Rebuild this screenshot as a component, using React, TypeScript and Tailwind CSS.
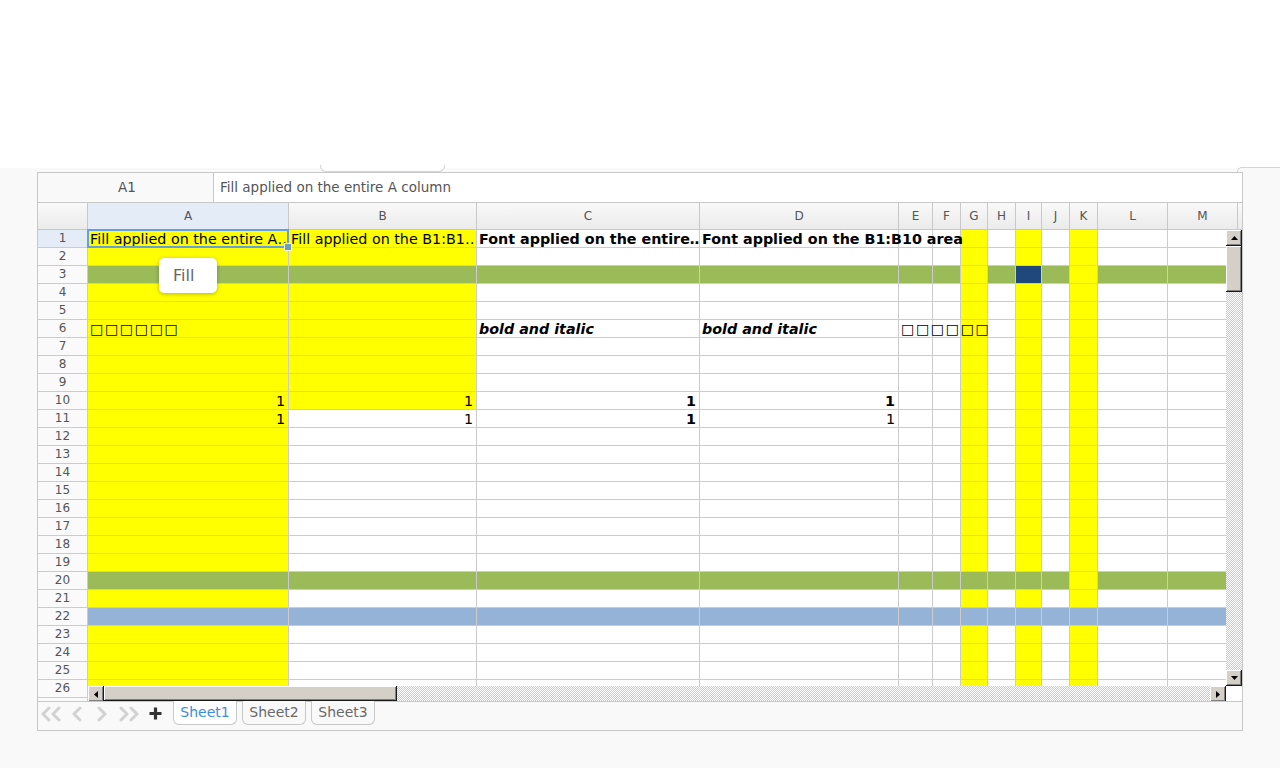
import React from 'react';

type Col = { id: string; w: string };
const COLS: Col[] = [
  { id: 'A', w: 'w-[201px]' },
  { id: 'B', w: 'w-[188px]' },
  { id: 'C', w: 'w-[223px]' },
  { id: 'D', w: 'w-[199px]' },
  { id: 'E', w: 'w-[34px]' },
  { id: 'F', w: 'w-[28px]' },
  { id: 'G', w: 'w-[27px]' },
  { id: 'H', w: 'w-[28px]' },
  { id: 'I', w: 'w-[26px]' },
  { id: 'J', w: 'w-[28px]' },
  { id: 'K', w: 'w-[28px]' },
  { id: 'L', w: 'w-[70px]' },
  { id: 'M', w: 'w-[70px]' },
];

type Content = { t: string; b?: boolean; i?: boolean; r?: boolean; over?: boolean; box?: boolean };
const BOXES = '\u25A1\u25A1\u25A1\u25A1\u25A1\u25A1';
const CONTENT: Record<string, Content> = {
  A1: { t: 'Fill applied on the entire A\u2026' },
  B1: { t: 'Fill applied on the B1:B1\u2026' },
  C1: { t: 'Font applied on the entire\u2026', b: true },
  D1: { t: 'Font applied on the B1:B10 area', b: true, over: true },
  A6: { t: BOXES, over: true, box: true },
  C6: { t: 'bold and italic', b: true, i: true },
  D6: { t: 'bold and italic', b: true, i: true },
  E6: { t: BOXES, over: true, box: true },
  A10: { t: '1', r: true },
  B10: { t: '1', r: true },
  C10: { t: '1', r: true, b: true },
  D10: { t: '1', r: true, b: true },
  A11: { t: '1', r: true },
  B11: { t: '1', r: true },
  C11: { t: '1', r: true, b: true },
  D11: { t: '1', r: true },
};

const YELLOW = 'bg-[#ffff00]';
const GREEN = 'bg-[#9bbb59]';
const BLUE = 'bg-[#95b3d7]';
const DARK = 'bg-[#1f497d]';
const WHITE = 'bg-white';

function fillOf(r: number, c: string): string {
  if (r === 3) {
    if (c === 'G' || c === 'K') return YELLOW;
    if (c === 'I') return DARK;
    return GREEN;
  }
  if (r === 20) {
    if (c === 'K') return YELLOW;
    return GREEN;
  }
  if (r === 22) return BLUE;
  if (c === 'A') return YELLOW;
  if (c === 'B' && r <= 10) return YELLOW;
  if (c === 'G' || c === 'I' || c === 'K') return YELLOW;
  return WHITE;
}

function Cell({ r, col }: { r: number; col: Col }) {
  const key = col.id + r;
  const ct = CONTENT[key];
  const bg = fillOf(r, col.id);
  const weight = ct?.b ? 'font-bold' : 'font-normal';
  const style = ct?.i ? 'italic' : 'not-italic';
  return (
    <div className={`${col.w} ${bg} relative flex h-[18px] shrink-0 items-center border-r border-b border-[#cccccc]`}>
      {ct &&
        (ct.over ? (
          <span
            className={`relative z-10 whitespace-nowrap pl-[2px] text-[14.3px] leading-[16px] text-black ${weight} ${style} ${
              ct.box ? 'tracking-[1.4px]' : 'tracking-normal'
            }`}
          >
            {ct.t}
          </span>
        ) : (
          <span
            className={`block w-full overflow-hidden whitespace-nowrap text-[14.3px] leading-[16px] text-black ${weight} ${style} ${
              ct.r ? 'pr-[3px] text-right' : 'pl-[2px] text-left'
            }`}
          >
            {ct.t}
          </span>
        ))}
      {key === 'A1' && (
        <>
          <div className="pointer-events-none absolute -top-px -left-px z-20 h-[19px] w-[202px] border-2 border-[#62a0df]" />
          <div className="absolute -right-[4px] -bottom-[4px] z-20 h-[8px] w-[8px] border border-[#f4f4d0] bg-[#6f9cc2]" />
        </>
      )}
    </div>
  );
}

function Row({ r }: { r: number }) {
  return (
    <div className="flex h-[18px]">
      <div
        className={`flex w-[50px] shrink-0 items-center justify-center border-r border-b border-[#cccccc] pb-[2px] text-[12px] text-[#555555] ${
          r === 1 ? 'bg-[#e4ecf7]' : 'bg-[#fafafa]'
        }`}
      >
        {r}
      </div>
      {COLS.map((c) => (
        <Cell key={c.id} r={r} col={c} />
      ))}
    </div>
  );
}

const BTN =
  'flex h-[16px] w-[16px] shrink-0 items-center justify-center bg-[#d4d0c8] shadow-[inset_-1px_-1px_#1a1a1a,inset_1px_1px_#ffffff,inset_-2px_-2px_#808080]';
const TRACK =
  'bg-[image:repeating-conic-gradient(#cfcac0_0%_25%,#ffffff_0%_50%)] bg-[length:2px_2px]';

function Tri({ dir }: { dir: 'up' | 'down' | 'left' | 'right' }) {
  const pts = {
    up: '0,4 7,4 3.5,0',
    down: '0,0 7,0 3.5,4',
    left: '4,0 4,7 0,3.5',
    right: '0,0 0,7 4,3.5',
  }[dir];
  const w = dir === 'up' || dir === 'down' ? 7 : 4;
  const h = dir === 'up' || dir === 'down' ? 4 : 7;
  return (
    <svg width={w} height={h} viewBox={`0 0 ${w} ${h}`}>
      <polygon points={pts} fill="#000" />
    </svg>
  );
}

function NavIcon({ d, w }: { d: string; w: number }) {
  return (
    <svg width={w} height={16} viewBox={`0 0 ${w} 16`} fill="none" stroke="#d2d2d2" strokeWidth={3} strokeLinecap="round" strokeLinejoin="round">
      <path d={d} />
    </svg>
  );
}

export default function App() {
  const rows = Array.from({ length: 27 }, (_, i) => i + 1);
  return (
    <div className="relative h-[768px] w-[1280px] overflow-hidden bg-[#f9f9f9] font-['DejaVu_Sans',sans-serif]">
      <div className="relative h-[168px] bg-white" />
      <div className="absolute top-[165px] left-[320px] h-[7px] w-[125px] rounded-b-[6px] border border-t-0 border-[#d4d4d4] bg-white" />
      <div className="absolute top-[167px] left-[1237px] h-[20px] w-[50px] rounded-tl-[5px] border-t border-l border-[#d4d4d4] bg-[#f9f9f9]" />

      <div className="relative z-10 mt-[4px] ml-[37px] w-[1206px] border border-[#c8c8c8] bg-white">
        {/* formula bar */}
        <div className="flex h-[30px] border-b border-[#c8c8c8]">
          <div className="flex w-[176px] shrink-0 items-center justify-center border-r border-[#c8c8c8] bg-[#f9f9f9] pl-[3px] text-[13.5px] text-[#555555]">
            A1
          </div>
          <div className="flex flex-1 items-center bg-white pl-[6px] text-[13.5px] text-[#555555]">
            Fill applied on the entire A column
          </div>
        </div>

        {/* column headers */}
        <div className="flex h-[27px] border-b border-[#c8c8c8] bg-linear-to-b from-[#f9f9f9] to-[#ebebeb]">
          <div className="w-[50px] shrink-0 border-r border-[#c8c8c8]" />
          {COLS.map((c) => (
            <div
              key={c.id}
              className={`${c.w} flex shrink-0 items-center justify-center border-r border-[#c8c8c8] text-[12px] text-[#555555] ${
                c.id === 'A' ? 'bg-[#e4ecf7]' : ''
              }`}
            >
              {c.id}
            </div>
          ))}
          <div className="flex-1" />
        </div>

        {/* grid body */}
        <div className="relative h-[471px] [clip-path:inset(-2px_0_0_0)]">
          {rows.map((r) => (
            <Row key={r} r={r} />
          ))}

          {/* tooltip */}
          <div className="absolute top-[28px] left-[121px] z-30 flex h-[35px] w-[58px] items-center rounded-[5px] bg-white pl-[14px] text-[16px] text-[#666666] shadow-[0_1px_4px_rgba(0,0,0,0.28)]">
            Fill
          </div>

          {/* vertical scrollbar */}
          <div className={`absolute top-0 right-0 bottom-[15px] z-40 flex w-[16px] flex-col ${TRACK}`}>
            <div className={BTN}>
              <Tri dir="up" />
            </div>
            <div className="h-[46px] w-[16px] shrink-0 bg-[#d4d0c8] shadow-[inset_-1px_-1px_#1a1a1a,inset_1px_1px_#ffffff,inset_-2px_-2px_#808080]" />
            <div className="flex-1" />
            <div className={BTN}>
              <Tri dir="down" />
            </div>
          </div>

          {/* horizontal scrollbar */}
          <div className={`absolute right-[16px] bottom-0 left-[50px] z-40 flex h-[15px] ${TRACK}`}>
            <div className={`${BTN} h-[15px]`}>
              <Tri dir="left" />
            </div>
            <div className="h-[15px] w-[293px] shrink-0 bg-[#d4d0c8] shadow-[inset_-1px_-1px_#1a1a1a,inset_1px_1px_#ffffff,inset_-2px_-2px_#808080]" />
            <div className="flex-1" />
            <div className={`${BTN} h-[15px]`}>
              <Tri dir="right" />
            </div>
          </div>
          <div className="absolute right-0 bottom-0 z-40 h-[15px] w-[16px] bg-white" />
        </div>

        {/* sheet tabs */}
        <div className="flex h-[29px] items-start border-t border-[#c8c8c8] bg-[#f9f9f9]">
          <div className="flex h-[23px] items-center">
            <div className="ml-[2px]">
              <NavIcon w={22} d="M9 2 L3 8 L9 14 M19 2 L13 8 L19 14" />
            </div>
            <div className="ml-[10px]">
              <NavIcon w={10} d="M8 2 L2 8 L8 14" />
            </div>
            <div className="ml-[15px]">
              <NavIcon w={10} d="M2 2 L8 8 L2 14" />
            </div>
            <div className="ml-[11px]">
              <NavIcon w={22} d="M3 2 L9 8 L3 14 M13 2 L19 8 L13 14" />
            </div>
            <div className="ml-[9px]">
              <svg width={13} height={13} viewBox="0 0 13 13" stroke="#333333" strokeWidth={3.2}>
                <path d="M6.5 0.5 V12.5 M0.5 6.5 H12.5" />
              </svg>
            </div>
          </div>
          <div className="-mt-px ml-[11px] flex h-[24px] w-[64px] items-center justify-center rounded-b-[6px] border border-t-0 border-[#c8c8c8] bg-white text-[14px] text-[#3b8ddc]">
            Sheet1
          </div>
          <div className="-mt-px ml-[5px] flex h-[24px] w-[64px] items-center justify-center rounded-b-[6px] border border-t-0 border-[#c8c8c8] bg-[#f9f9f9] text-[14px] text-[#6a6a6a]">
            Sheet2
          </div>
          <div className="-mt-px ml-[5px] flex h-[24px] w-[64px] items-center justify-center rounded-b-[6px] border border-t-0 border-[#c8c8c8] bg-[#f9f9f9] text-[14px] text-[#6a6a6a]">
            Sheet3
          </div>
        </div>
      </div>
    </div>
  );
}
